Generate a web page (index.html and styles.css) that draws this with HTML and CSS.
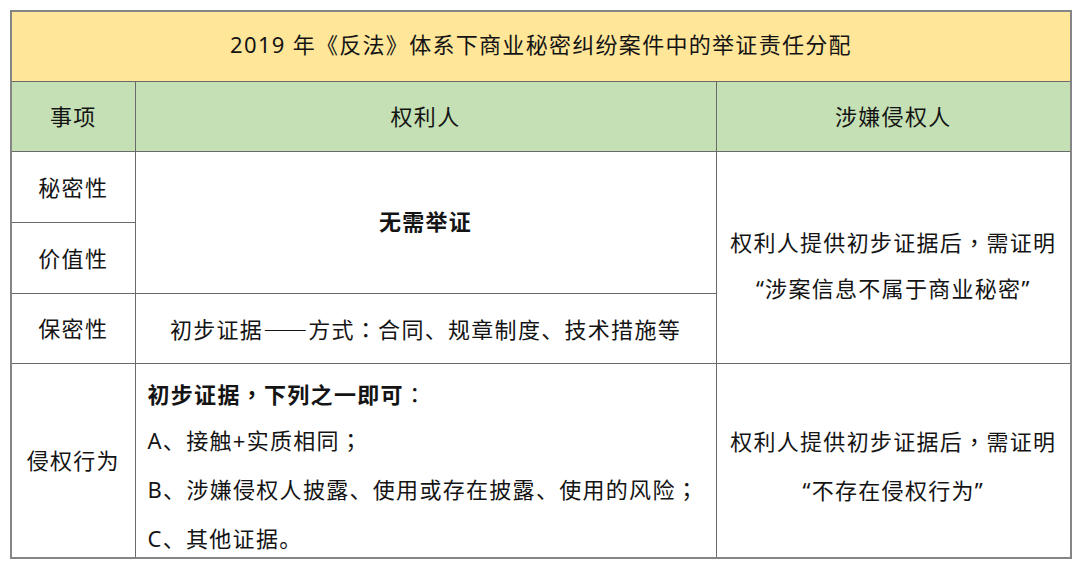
FILE: index.html
```html
<!DOCTYPE html>
<html lang="zh-CN">
<head>
<meta charset="utf-8">
<link rel="stylesheet" href="styles.css">
</head>
<body>
<table class="evidence">
  <colgroup>
    <col class="c1">
    <col class="c2">
    <col class="c3">
  </colgroup>
  <tr class="r-title">
    <td colspan="3" class="title">2019 年《反法》体系下商业秘密纠纷案件中的举证责任分配</td>
  </tr>
  <tr class="r-head">
    <td class="head">事项</td>
    <td class="head">权利人</td>
    <td class="head">涉嫌侵权人</td>
  </tr>
  <tr class="r-row">
    <td class="label">秘密性</td>
    <td rowspan="2" class="center bold nojq">无需举证</td>
    <td rowspan="3" class="defend defend-top">
      <div>权利人提供初步证据后<span class="pc" lang="zh-TW">，</span>需证明</div>
      <div>“涉案信息不属于商业秘密”</div>
    </td>
  </tr>
  <tr class="r-row">
    <td class="label">价值性</td>
  </tr>
  <tr class="r-row3">
    <td class="label">保密性</td>
    <td class="center">初步证据<span class="dash">——</span>方式<span class="pc" lang="zh-TW">：</span>合同、规章制度、技术措施等</td>
  </tr>
  <tr class="r-last">
    <td class="label">侵权行为</td>
    <td class="list">
      <div class="ln ln-first"><span class="bold">初步证据<span class="pc" lang="zh-TW">，</span>下列之一即可</span><span class="pc" lang="zh-TW">：</span></div>
      <div class="ln ln-a">A、接触+实质相同<span class="pc" lang="zh-TW">；</span></div>
      <div class="ln">B、涉嫌侵权人披露、使用或存在披露、使用的风险<span class="pc" lang="zh-TW">；</span></div>
      <div class="ln ln-last">C、其他证据。</div>
    </td>
    <td class="defend defend-bottom">
      <div>权利人提供初步证据后<span class="pc" lang="zh-TW">，</span>需证明</div>
      <div>“不存在侵权行为”</div>
    </td>
  </tr>
</table>
</body>
</html>
```

FILE: styles.css
```css
html, body {
  margin: 0;
  padding: 0;
  background: #ffffff;
}

body {
  padding: 10px 0 0 10px;
  font-family: "Noto Sans", "Noto Sans CJK SC", sans-serif;
  font-size: 22px;
  letter-spacing: 1.3px;
  color: #141414;
}

.evidence {
  border-collapse: collapse;
  table-layout: fixed;
  width: 1061px;
  border: 2px solid #858585;
}

.c1 { width: 124px; }
.c2 { width: 581px; }
.c3 { width: 355px; }

.evidence td {
  border: 1px solid #6a6a6a;
  padding: 0;
  vertical-align: middle;
  line-height: 30px;
}

.r-title { height: 70px; }
.r-head { height: 70px; }
.r-row { height: 71px; }
.r-row3 { height: 70px; }
.r-last { height: 195px; }

.title {
  background: #ffe699;
  text-align: center;
}

.evidence td.title {
  padding-bottom: 4px;
}

.head {
  background: #c5e0b4;
  text-align: center;
}

.label {
  text-align: center;
}

.center {
  text-align: center;
}

.evidence td.nojq {
  padding-bottom: 3px;
}

.bold {
  font-weight: 700;
}

.pc {
  font-family: "Noto Sans CJK TC", sans-serif;
}

.dash {
  font-family: "Noto Sans CJK SC", sans-serif;
  letter-spacing: 0;
  margin-right: 1px;
}

.evidence td.defend {
  text-align: center;
  line-height: 46px;
}

.evidence td.defend-top {
  padding-top: 14px;
}

.evidence td.defend-bottom {
  padding-top: 11px;
  line-height: 49px;
}

.evidence td.list {
  vertical-align: top;
  padding: 7px 0 0 12px;
}

.ln {
  height: 50px;
  line-height: 50px;
  white-space: nowrap;
}

.ln-first {
  height: 44px;
  line-height: 44px;
}

.ln-a {
  height: 48px;
  line-height: 48px;
}

.ln-last {
  height: 36px;
  line-height: 50px;
}
```
